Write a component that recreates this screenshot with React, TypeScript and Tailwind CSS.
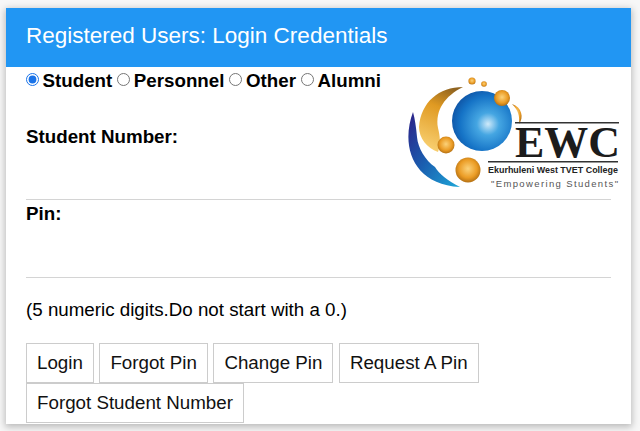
const font = { fontFamily: '"Liberation Sans", Arial, sans-serif' };

function Logo() {
  return (
    <svg viewBox="0 0 216 124" className="float-right mt-[5px] mb-[3px] -mr-[10px] h-[124px] w-[216px]">
      <defs>
        <radialGradient id="ball" cx="0.6" cy="0.55" r="0.62">
          <stop offset="0" stopColor="#cfeafa" />
          <stop offset="0.3" stopColor="#45a6e2" />
          <stop offset="0.75" stopColor="#1573c6" />
          <stop offset="1" stopColor="#0f55a6" />
        </radialGradient>
        <radialGradient id="gold" cx="0.5" cy="0.45" r="0.6">
          <stop offset="0" stopColor="#fbd27a" />
          <stop offset="0.6" stopColor="#eb9c25" />
          <stop offset="1" stopColor="#a5650f" />
        </radialGradient>
        <linearGradient id="crescentGold" x1="0.7" y1="0" x2="0.4" y2="1">
          <stop offset="0" stopColor="#8f6320" />
          <stop offset="0.35" stopColor="#e09a22" />
          <stop offset="1" stopColor="#f8cf70" />
        </linearGradient>
        <linearGradient id="crescentBlue" x1="0" y1="0" x2="1" y2="1">
          <stop offset="0" stopColor="#2c1f86" />
          <stop offset="0.5" stopColor="#1a5fb0" />
          <stop offset="1" stopColor="#1ea7d8" />
        </linearGradient>
      </defs>
      <path d="M8 40 C-4 72 6 112 55 115 C42 108 34 102 30 95 C20 88 13 76 12 65 C11 55 10 47 8 40 Z" fill="url(#crescentBlue)" />
      <path d="M58 15 C34 15 16 30 14 55 C14 66 22 76 33 80 C36 72 35 64 33 56 C30 38 40 24 58 15 Z" fill="url(#crescentGold)" />
      <circle cx="77" cy="49" r="30" fill="url(#ball)" />
      <circle cx="67" cy="9" r="3.6" fill="url(#gold)" />
      <circle cx="79" cy="12" r="2.8" fill="url(#gold)" />
      <circle cx="97" cy="26" r="8" fill="url(#gold)" />
      <path d="M107 32 C117 35 119 46 114 52 C115 44 113 38 107 32 Z" fill="url(#gold)" />
      <circle cx="41" cy="73" r="8.5" fill="url(#gold)" />
      <circle cx="63" cy="98" r="12.5" fill="url(#gold)" />
      <rect x="110" y="50" width="104" height="1.5" fill="#333" />
      <rect x="83" y="89" width="130" height="1.5" fill="#333" />
      <text x="110" y="85" fontFamily="'Liberation Serif', serif" fontSize="44" fontWeight="700" fill="#1c1c1c" textLength="105" lengthAdjust="spacingAndGlyphs">EWC</text>
      <text x="83" y="101" fontFamily="'Liberation Sans', sans-serif" fontSize="8.5" fontWeight="700" fill="#222" textLength="130" lengthAdjust="spacingAndGlyphs">Ekurhuleni West TVET College</text>
      <text x="86" y="115" fontFamily="'Liberation Sans', sans-serif" fontSize="9.5" fill="#555" textLength="127" lengthAdjust="spacing">"Empowering Students"</text>
    </svg>
  );
}

function Radio({ label, checked }: { label: string; checked?: boolean }) {
  return (
    <label className="inline-flex items-start font-bold">
      <input type="radio" name="kind" defaultChecked={checked} className="m-0 mt-[6px] mr-[3.5px] h-[13px] w-[13px] accent-[#1a73e8]" style={{ appearance: "auto" }} />
      {label}
    </label>
  );
}

function Btn({ label }: { label: string }) {
  return (
    <button className="h-[40px] border border-[#cccccc] bg-white px-[10px] text-[18.75px] leading-none text-[#111]">
      {label}
    </button>
  );
}

export default function App() {
  return (
    <div className="h-[431px] w-[640px] overflow-hidden bg-[#f7f7f7] pl-[6px] pt-[8px]" style={font}>
      <div className="h-[416px] w-[625px] bg-white shadow-[0_2px_7px_1px_rgba(0,0,0,0.25)]">
        <div className="flex h-[59px] items-center bg-[#2196f3] px-5 pb-[3px] text-[22.5px] text-white">
          Registered Users: Login Credentials
        </div>
        <div className="px-5 text-[18.75px] leading-[27px] text-black">
          <Logo />
          <div className="flex h-[26px] gap-[5px]">
            <Radio label="Student" checked />
            <Radio label="Personnel" />
            <Radio label="Other" />
            <Radio label="Alumni" />
          </div>
          <div className="mt-[30px] font-bold">Student Number:</div>
          <hr className="clear-both border-t border-[#d4d4d4]" />
          <div className="font-bold">Pin:</div>
          <hr className="mt-[50px] border-t border-[#d4d4d4]" />
          <div className="mt-[18px]">(5 numeric digits.Do not start with a 0.)</div>
          <div className="mt-[20px] flex flex-wrap gap-x-[5.5px]">
            <Btn label="Login" />
            <Btn label="Forgot Pin" />
            <Btn label="Change Pin" />
            <Btn label="Request A Pin" />
            <Btn label="Forgot Student Number" />
          </div>
        </div>
      </div>
    </div>
  );
}
